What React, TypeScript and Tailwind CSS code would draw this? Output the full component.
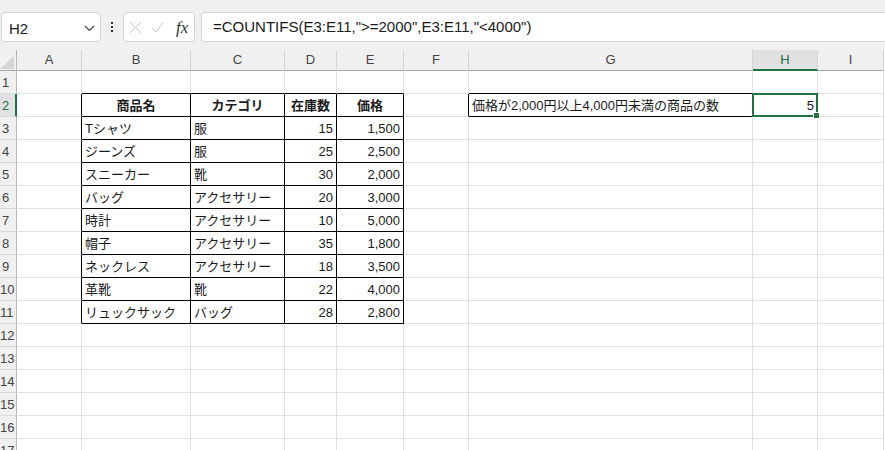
import React from 'react';

const cols = ['A', 'B', 'C', 'D', 'E', 'F', 'G', 'H', 'I'];

// product table, rows 3..11
const items: [string, string, string, string][] = [
  ['Tシャツ', '服', '15', '1,500'],
  ['ジーンズ', '服', '25', '2,500'],
  ['スニーカー', '靴', '30', '2,000'],
  ['バッグ', 'アクセサリー', '20', '3,000'],
  ['時計', 'アクセサリー', '10', '5,000'],
  ['帽子', 'アクセサリー', '35', '1,800'],
  ['ネックレス', 'アクセサリー', '18', '3,500'],
  ['革靴', '靴', '22', '4,000'],
  ['リュックサック', 'バッグ', '28', '2,800'],
];

type CellProps = {
  r?: boolean; // black right border
  b?: boolean; // black bottom border
  align?: 'left' | 'right' | 'center';
  bold?: boolean;
  children?: React.ReactNode;
  selected?: boolean;
};

const Cell: React.FC<CellProps> = ({ r, b, align = 'left', bold, children, selected }) => {
  const rc = r ? 'border-r-black' : 'border-r-[#e1e1e1]';
  const bc = b ? 'border-b-black' : 'border-b-[#e1e1e1]';
  const ac =
    align === 'right' ? 'justify-end pr-[3px]' : align === 'center' ? 'justify-center' : 'justify-start pl-[3px]';
  return (
    <div
      className={`relative flex items-center border-r border-b ${rc} ${bc} ${ac} ${bold ? 'font-bold' : ''} overflow-visible whitespace-nowrap pt-[1px] text-[13px] text-[#1a1a1a]`}
    >
      {children}
      {selected && (
        <div className="absolute -left-[1px] -top-[1px] -right-[1px] -bottom-[1px] z-10 border-2 border-[#217346]">
          <div className="absolute -right-[4px] -bottom-[4px] h-[7px] w-[7px] border border-white bg-[#217346]" />
        </div>
      )}
    </div>
  );
};

const RowHead: React.FC<{ n: number; active?: boolean }> = ({ n, active }) => (
  <div
    className={`flex items-center border-b border-b-[#d9d9d9] ${
      active ? 'border-r-2 border-r-[#217346] bg-[#e1e1e1] text-[#217346]' : 'border-r border-r-[#b8b8b8] bg-[#f0f0f0] text-[#444]'
    } pt-[2px] text-[13px]`}
  >
    <span className="w-[11px] text-center">{n}</span>
  </div>
);

export default function App() {
  const rows: React.ReactNode[] = [];

  for (let n = 1; n <= 17; n++) {
    const cells: React.ReactNode[] = [];
    const inTable = n >= 2 && n <= 11;
    // A
    cells.push(<Cell key="A" r={inTable} />);
    if (n === 2) {
      cells.push(<Cell key="B" r b align="center" bold>商品名</Cell>);
      cells.push(<Cell key="C" r b align="center" bold>カテゴリ</Cell>);
      cells.push(<Cell key="D" r b align="center" bold>在庫数</Cell>);
      cells.push(<Cell key="E" r b align="center" bold>価格</Cell>);
    } else if (inTable) {
      const it = items[n - 3];
      cells.push(<Cell key="B" r b>{it[0]}</Cell>);
      cells.push(<Cell key="C" r b>{it[1]}</Cell>);
      cells.push(<Cell key="D" r b align="right">{it[2]}</Cell>);
      cells.push(<Cell key="E" r b align="right">{it[3]}</Cell>);
    } else {
      cells.push(<Cell key="B" b={n === 1} />);
      cells.push(<Cell key="C" b={n === 1} />);
      cells.push(<Cell key="D" b={n === 1} />);
      cells.push(<Cell key="E" b={n === 1} />);
    }
    cells.push(<Cell key="F" r={n === 2} />);
    if (n === 2) {
      cells.push(<Cell key="G" r b>価格が2,000円以上4,000円未満の商品の数</Cell>);
      cells.push(<Cell key="H" align="right" selected>5</Cell>);
    } else {
      cells.push(<Cell key="G" b={n === 1} />);
      cells.push(<Cell key="H" />);
    }
    cells.push(<Cell key="I" />);
    rows.push(
      <React.Fragment key={n}>
        <RowHead n={n} active={n === 2} />
        {cells}
      </React.Fragment>
    );
  }

  return (
    <div className="h-[450px] w-[885px] overflow-hidden bg-white font-['Liberation_Sans','Noto_Sans_CJK_JP',sans-serif]">
      {/* name box + formula bar */}
      <div className="flex h-[50px] items-start bg-[#f0f0f0] pt-[12px]">
        <div className="ml-[1px] flex h-[30px] w-[100px] items-center justify-between rounded-[4px] border border-[#d4d4d4] bg-white pl-[7px] pr-[5px]">
          <span className="pt-[4px] text-[15px] text-[#1a1a1a]">H2</span>
          <svg width="11" height="7" viewBox="0 0 11 7" className="mt-[2px]">
            <path d="M1 1 L5.5 5.5 L10 1" fill="none" stroke="#444" strokeWidth="1.2" />
          </svg>
        </div>
        <div className="flex h-[30px] w-[22px] flex-col items-center justify-center gap-[2px]">
          <span className="h-[2px] w-[2px] bg-[#333]" />
          <span className="h-[2px] w-[2px] bg-[#333]" />
          <span className="h-[2px] w-[2px] bg-[#333]" />
        </div>
        <div className="flex h-[30px] w-[72px] items-center rounded-[4px] border border-[#d4d4d4] bg-white pl-[5px]">
          <svg width="13" height="13" viewBox="0 0 13 13">
            <path d="M1 1 L12 12 M12 1 L1 12" stroke="#c4c4c4" strokeWidth="1" fill="none" />
          </svg>
          <svg width="13" height="13" viewBox="0 0 13 13" className="ml-[9px]">
            <path d="M1 7 L5 11 L12 1.5" stroke="#c4c4c4" strokeWidth="1" fill="none" />
          </svg>
          <span className="ml-[12px] font-['Liberation_Serif',serif] text-[17px] italic leading-none text-[#333]">fx</span>
        </div>
        <div className="ml-[6px] flex h-[30px] flex-1 items-center rounded-l-[4px] border border-r-0 border-[#d4d4d4] bg-white pl-[11px] text-[15px] text-[#1a1a1a]">
          =COUNTIFS(E3:E11,"&gt;=2000",E3:E11,"&lt;4000")
        </div>
      </div>

      {/* sheet grid */}
      <div className="grid grid-cols-[17px_65px_109px_94px_52px_67px_65px_284px_65px_66px] grid-rows-[21px_repeat(17,23px)]">
        <div className="relative border-b border-r border-b-[#a8a8a8] border-r-[#b8b8b8] bg-[#f0f0f0]">
          <svg width="14" height="13" viewBox="0 0 14 13" className="absolute bottom-[1px] right-[2px]">
            <path d="M14 0 L14 13 L0 13 Z" fill="#d6d6d6" />
          </svg>
        </div>
        {cols.map((c) =>
          c === 'H' ? (
            <div
              key={c}
              className="flex items-center justify-center border-r border-b-2 border-r-[#d4d4d4] border-b-[#217346] bg-[#e1e1e1] text-[13px] text-[#1e6b41]"
            >
              {c}
            </div>
          ) : (
            <div
              key={c}
              className="flex items-center justify-center border-r border-b border-r-[#d4d4d4] border-b-[#a8a8a8] bg-[#f0f0f0] text-[13px] text-[#444]"
            >
              {c}
            </div>
          )
        )}
        {rows}
      </div>
    </div>
  );
}
